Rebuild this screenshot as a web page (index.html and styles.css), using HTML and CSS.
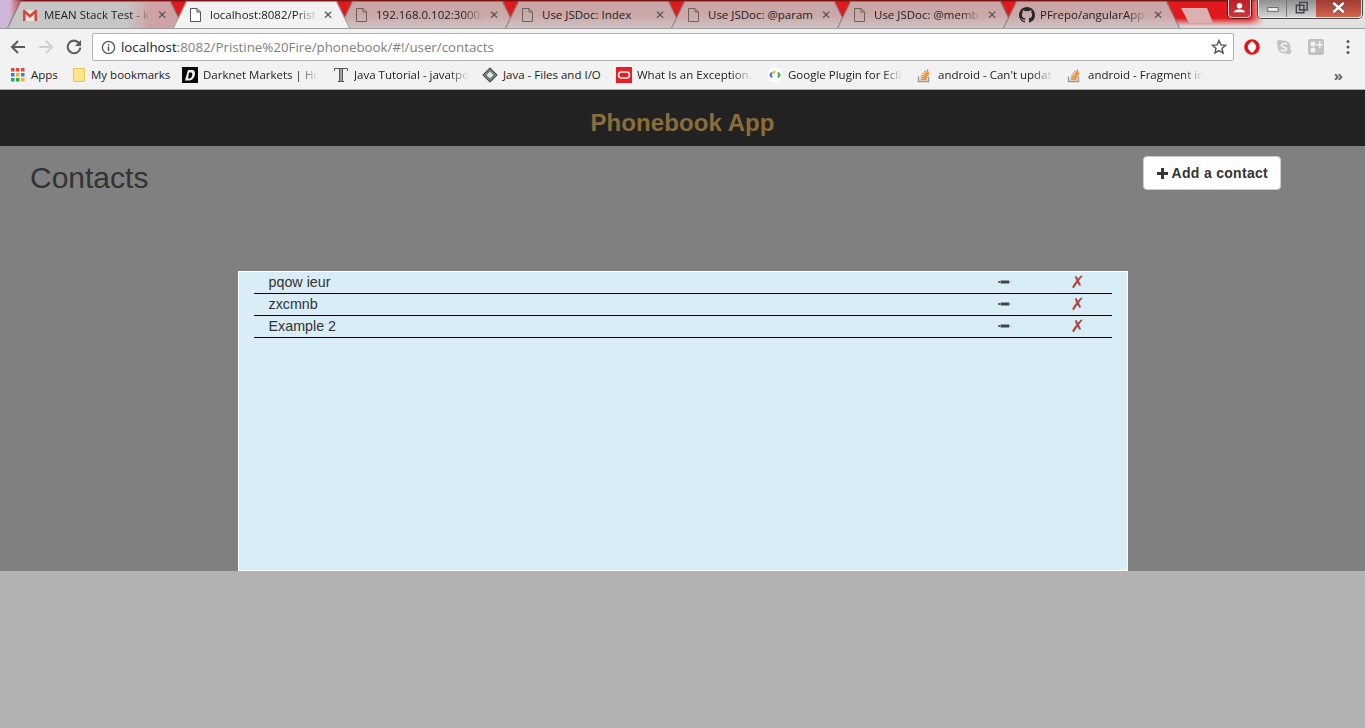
FILE: index.html
```html
<!DOCTYPE html>
<html lang="en">
<head>
  <meta charset="UTF-8" />
  <title>Phonebook App</title>
  <link rel="stylesheet" href="styles.css">
</head>
<body>
  <div class="browser">
    <div class="tabstrip">
      <div class="tab tab-first">
        <svg class="tab-icon" viewBox="0 0 16 16"><path fill="#e4e4e4" d="M0 3h14v11H0z"/><path fill="#d5473b" d="M0 3h2L7 7.500 12 3h2v11h-2.500V7L7 11 2.500 7v7H0z"/></svg>
        <span class="tab-title">MEAN Stack Test - k</span>
        <span class="tab-close">✕</span>
      </div>
      <div class="tab tab-active">
        <svg class="tab-icon" viewBox="0 0 16 16"><path fill="#fff" stroke="#555" d="M1.500 1.500H8l3.500 3.500v9.500h-10z M8 1.500V5h3.500"/></svg>
        <span class="tab-title">localhost:8082/Prist</span>
        <span class="tab-close">✕</span>
      </div>
      <div class="tab">
        <svg class="tab-icon" viewBox="0 0 16 16"><path fill="none" stroke="#665" d="M1.500 1.500H8l3.500 3.500v9.500h-10z M8 1.500V5h3.500"/></svg>
        <span class="tab-title">192.168.0.102:3000/</span>
        <span class="tab-close">✕</span>
      </div>
      <div class="tab">
        <svg class="tab-icon" viewBox="0 0 16 16"><path fill="none" stroke="#665" d="M1.500 1.500H8l3.500 3.500v9.500h-10z M8 1.500V5h3.500"/></svg>
        <span class="tab-title tab-title-full">Use JSDoc: Index</span>
        <span class="tab-close">✕</span>
      </div>
      <div class="tab">
        <svg class="tab-icon" viewBox="0 0 16 16"><path fill="none" stroke="#665" d="M1.500 1.500H8l3.500 3.500v9.500h-10z M8 1.500V5h3.500"/></svg>
        <span class="tab-title tab-title-full">Use JSDoc: @param</span>
        <span class="tab-close">✕</span>
      </div>
      <div class="tab">
        <svg class="tab-icon" viewBox="0 0 16 16"><path fill="none" stroke="#665" d="M1.500 1.500H8l3.500 3.500v9.500h-10z M8 1.500V5h3.500"/></svg>
        <span class="tab-title">Use JSDoc: @memb</span>
        <span class="tab-close">✕</span>
      </div>
      <div class="tab">
        <svg class="tab-icon" viewBox="0 0 16 16"><path fill="#24292e" d="M8 0C3.580 0 0 3.580 0 8c0 3.540 2.290 6.530 5.470 7.590.4.070.55-.17.55-.38v-1.340c-2.230.48-2.700-1.070-2.700-1.070-.36-.92-.89-1.170-.89-1.170-.73-.5.050-.49.050-.49.800.060 1.230.830 1.230.830.710 1.220 1.870.870 2.330.660.070-.520.280-.870.510-1.070-1.780-.2-3.640-.890-3.640-3.950 0-.870.310-1.590.820-2.150-.080-.2-.360-1.020.080-2.120 0 0 .670-.210 2.200.820a7.600 7.600 0 0 1 4 0c1.530-1.040 2.200-.820 2.200-.820.440 1.100.160 1.920.080 2.120.510.560.820 1.270.820 2.150 0 3.070-1.870 3.750-3.650 3.950.290.250.540.730.540 1.480v2.200c0 .210.150.460.550.380A8 8 0 0 0 16 8c0-4.420-3.580-8-8-8z"/></svg>
        <span class="tab-title">PFrepo/angularApp</span>
        <span class="tab-close">✕</span>
      </div>
      <div class="newtab"></div>
      <div class="winbtns">
        <div class="winbtn-user">
          <svg viewBox="0 0 23 18"><circle cx="11.500" cy="6" r="3" fill="#fff"/><path fill="#fff" d="M5 13c1-2.500 4-3 6.500-3s5.500.5 6.500 3z"/></svg>
        </div>
        <div class="winbtn-group">
          <div class="winbtn winbtn-min"><svg viewBox="0 0 28 18"><rect x="9" y="8" width="11" height="4" fill="#eee" stroke="#667"/></svg></div>
          <div class="winbtn winbtn-max"><svg viewBox="0 0 29 18"><path fill="none" stroke="#445" stroke-width="1.500" d="M12.500 2.500h8v8h-8z M9 5.500h8v8H9z"/></svg></div>
          <div class="winbtn winbtn-close"><svg viewBox="0 0 45 18"><path stroke="#555" stroke-width="4" d="M17 3l11 10M28 3 17 13"/><path stroke="#fff" stroke-width="2.600" d="M17 3l11 10M28 3 17 13"/></svg></div>
        </div>
      </div>
    </div>

    <div class="toolbar">
      <svg class="nav-icon" viewBox="0 0 16 16"><path fill="none" stroke="#5a5a5a" stroke-width="2" d="M15 8H2.500M8 2 2 8l6 6"/></svg>
      <svg class="nav-icon" viewBox="0 0 16 16"><path fill="none" stroke="#cfcfcf" stroke-width="2" d="M1 8h12.500M8 2l6 6-6 6"/></svg>
      <svg class="nav-icon" viewBox="0 0 16 16"><path fill="none" stroke="#5a5a5a" stroke-width="2" d="M13.600 5A6.300 6.300 0 1 0 14.300 8.500"/><path fill="#5a5a5a" d="M15 1v6H9z"/></svg>
      <div class="omnibox">
        <svg class="info-icon" viewBox="0 0 16 16"><circle cx="8" cy="8" r="6.500" fill="none" stroke="#555" stroke-width="1.400"/><path fill="#555" d="M7.200 7h1.600v4.800H7.200zM7.200 4.200h1.600v1.600H7.200z"/></svg>
        <span class="url"><span class="url-host">localhost</span>:8082/Pristine%20Fire/phonebook/#!/user/contacts</span>
        <svg class="star-icon" viewBox="0 0 16 16"><path fill="none" stroke="#555" stroke-width="1.400" d="M8 1.500l1.900 4.400 4.700.4-3.600 3.100 1.100 4.700L8 11.600l-4.100 2.500L5 9.400 1.400 6.300l4.700-.4z"/></svg>
      </div>
      <div class="extensions">
        <svg class="ext-icon" viewBox="0 0 16 16"><circle cx="8" cy="8" r="6" fill="#fff" stroke="#e3151a" stroke-width="3.600"/><ellipse cx="8" cy="8" rx="2.800" ry="5.500" fill="#fff"/></svg>
        <svg class="ext-icon" viewBox="0 0 16 16"><circle cx="8" cy="8" r="6.500" fill="#c4c4c4"/><circle cx="3.800" cy="3.800" r="3" fill="#c4c4c4"/><circle cx="12.200" cy="12.200" r="3" fill="#c4c4c4"/><path fill="none" stroke="#f2f2f2" stroke-width="1.800" d="M11 5.500C10 4 6 4 5.500 6c-.4 2.400 5 1.600 5 4 0 2-4 2.400-5.500.5"/></svg>
        <svg class="ext-icon" viewBox="0 0 16 16"><rect width="16" height="16" rx="2" fill="#c2c2c2"/><circle cx="5" cy="5" r="2.500" fill="#f2f2f2"/><circle cx="5" cy="11" r="2.500" fill="#f2f2f2"/><path fill="#f2f2f2" d="M11 2h1.500v3H15v1.500h-2.500v3H11v-3H8.500V5H11z"/></svg>
        <svg class="menu-icon" viewBox="0 0 4 16"><circle cx="2" cy="2.500" r="1.500" fill="#5a5a5a"/><circle cx="2" cy="8" r="1.500" fill="#5a5a5a"/><circle cx="2" cy="13.500" r="1.500" fill="#5a5a5a"/></svg>
      </div>
    </div>

    <div class="bookmarks">
      <div class="bm bm-apps">
        <svg class="bm-icon" viewBox="0 0 14 14">
          <path fill="#e04a3f" d="M0 0h3.500v3.500H0zM5 0h3.500v3.500H5zM10 0h3.500v3.500H10z"/>
          <path fill="#3a7de0" d="M0 5h3.500v3.500H0zM10 5h3.500v3.500H10z"/>
          <path fill="#efb51a" d="M5 5h3.500v3.500H5zM10 10h3.500v3.500H10z"/>
          <path fill="#36a852" d="M0 10h3.500v3.500H0zM5 10h3.500v3.500H5z"/>
        </svg>
        <span>Apps</span>
      </div>
      <div class="bm bm-folder">
        <svg class="bm-icon" viewBox="0 0 14 16"><path fill="#fde68a" stroke="#e8c65a" d="M1.500 1.500h11v13h-11z"/></svg>
        <span>My bookmarks</span>
      </div>
      <div class="bm">
        <svg class="bm-icon" viewBox="0 0 16 16"><rect width="16" height="16" fill="#0a0a0a"/><path fill="#f4f4f4" d="M6 3h4c3 0 3.500 3 2.500 6-1 3-3 4.500-6 4.500H3z"/><path fill="#0a0a0a" d="M7 5.500h2c1.500 0 1.500 2 1 3.500s-1.500 2.500-3 2.500H6z"/></svg>
        <span class="bm-title">Darknet Markets | Hov</span>
      </div>
      <div class="bm bm-java">
        <svg class="bm-icon" viewBox="0 0 16 16"><path fill="none" stroke="#555" d="M1.500 4V1.500h13V4M8 1.500v13M5 14.500h6M6.500 1.500v13M9.500 1.500v13"/></svg>
        <span class="bm-title">Java Tutorial - javatpo</span>
      </div>
      <div class="bm bm-files">
        <svg class="bm-icon" viewBox="0 0 16 16"><path fill="#6e7f72" stroke="#333" d="M8 .8 15.200 8 8 15.200.8 8z"/><path fill="#dfe8e0" d="M8 4.500 11.500 8 8 11.500 4.500 8z"/></svg>
        <span class="bm-text">Java - Files and I/O</span>
      </div>
      <div class="bm">
        <svg class="bm-icon" viewBox="0 0 16 16"><rect width="16" height="16" fill="#ed1c24"/><rect x="2.500" y="5" width="11" height="6" rx="3" fill="none" stroke="#fff" stroke-width="1.500"/></svg>
        <span class="bm-title">What Is an Exception?</span>
      </div>
      <div class="bm bm-tight">
        <svg class="bm-icon" viewBox="0 0 16 16"><circle cx="8" cy="8" r="7.500" fill="#fff"/><path fill="none" stroke="#3a7de0" stroke-width="2" d="M5 5.500 3.500 8 5 10.500"/><path fill="none" stroke="#efb51a" stroke-width="2" d="M8 3.800 6 6.500"/><path fill="none" stroke="#36a852" stroke-width="2" d="M11 5.500 12.500 8 11 10.500"/></svg>
        <span class="bm-title">Google Plugin for Eclip</span>
      </div>
      <div class="bm bm-tight">
        <svg class="bm-icon" viewBox="0 0 16 16"><path fill="none" stroke="#999" stroke-width="1.400" d="M1.500 9.500v5h10v-5"/><path fill="none" stroke="#f08a24" stroke-width="1.400" d="M3.500 12.500h6M3.700 10.400l6 .6M4.300 8.300l5.800 1.600M5.500 6l5 3M7.500 4l3.700 4.200M10 2.500l1.800 5"/></svg>
        <span class="bm-title">android - Can't update</span>
      </div>
      <div class="bm">
        <svg class="bm-icon" viewBox="0 0 16 16"><path fill="none" stroke="#999" stroke-width="1.400" d="M1.500 9.500v5h10v-5"/><path fill="none" stroke="#f08a24" stroke-width="1.400" d="M3.500 12.500h6M3.700 10.400l6 .6M4.300 8.300l5.800 1.600M5.500 6l5 3M7.500 4l3.700 4.200M10 2.500l1.800 5"/></svg>
        <span class="bm-title">android - Fragment in</span>
      </div>
      <span class="bm-more">»</span>
    </div>
  </div>

  <div class="app">
    <header class="app-header">
      <h1>Phonebook App</h1>
    </header>
    <main class="app-main">
      <div class="title-row">
        <h2>Contacts</h2>
        <button class="add-btn">
          <svg class="plus" viewBox="0 0 11 11"><path fill="#333" d="M4 0h3v4h4v3H7v4H4V7H0V4h4z"/></svg>
          Add a contact
        </button>
      </div>
      <div class="panel">
        <div class="contact-row">
          <span class="contact-name">pqow ieur</span>
          <span class="contact-edit"><svg viewBox="0 0 14 4"><path fill="#444" d="M0 1.500 2 1v2L0 2.500zM2.500 .5H11v3H2.500z"/><path fill="#667" d="M11 1.500l3 .5-3 .5z"/></svg></span>
          <span class="contact-del">✗</span>
        </div>
        <div class="contact-row">
          <span class="contact-name">zxcmnb</span>
          <span class="contact-edit"><svg viewBox="0 0 14 4"><path fill="#444" d="M0 1.500 2 1v2L0 2.500zM2.500 .5H11v3H2.500z"/><path fill="#667" d="M11 1.500l3 .5-3 .5z"/></svg></span>
          <span class="contact-del">✗</span>
        </div>
        <div class="contact-row">
          <span class="contact-name">Example 2</span>
          <span class="contact-edit"><svg viewBox="0 0 14 4"><path fill="#444" d="M0 1.500 2 1v2L0 2.500zM2.500 .5H11v3H2.500z"/><path fill="#667" d="M11 1.500l3 .5-3 .5z"/></svg></span>
          <span class="contact-del">✗</span>
        </div>
      </div>
    </main>
  </div>
</body>
</html>
```

FILE: styles.css
```css
* {
  box-sizing: border-box;
  margin: 0;
  padding: 0;
}

html, body {
  height: 728px;
  overflow: hidden;
}

body {
  display: flex;
  flex-direction: column;
  background: #b2b2b2;
  font-family: 'Liberation Sans', Arial, sans-serif;
  color: #333;
}

/* browser chrome */
.browser {
  height: 90px;
  flex: none;
  font-family: 'Open Sans', 'Noto Sans', sans-serif;
  font-size: 11.5px;
  color: #222;
}

.tabstrip {
  height: 29px;
  display: flex;
  padding-left: 7px;
  border-bottom: 1px solid #9c9c9c;
  background:
    linear-gradient(to right, #cdb6d8 0, #cdb6d8 10px, rgba(205, 182, 216, 0) 24px),
    linear-gradient(to right, rgba(226, 226, 226, 0) 1250px, #e2e2e2 1264px),
    linear-gradient(to bottom, #7c1416 0, #7c1416 1px, #e2191c 2px, #e2191c 18px, #dcd4d4 26px);
}

.tab {
  position: relative;
  width: 177px;
  height: 27px;
  margin-top: 1px;
  margin-right: -11px;
  padding: 0 16px 0 16px;
  display: flex;
  align-items: center;
  background: #877;
  clip-path: polygon(13px 0, 164px 0, 177px 100%, 0 100%);
}

.tab::before {
  content: '';
  position: absolute;
  top: 1px;
  left: 1px;
  right: 1px;
  bottom: 0;
  background: linear-gradient(to bottom, #c9a4a4 0, #cca9a9 14px, #cfc6c6 27px);
  clip-path: polygon(13px 0, 162px 0, 175px 100%, 0 100%);
}

.tab-first::before {
  background: linear-gradient(to right, #c6c6c6 0, #c6c6c6 118px, #cfa3a3 142px);
}

.tab-active {
  z-index: 2;
  background: #9c9c9c;
}

.tab-active::before {
  background: #f2f2f2;
}

.tab-icon {
  position: relative;
  width: 16px;
  height: 16px;
  margin-right: 5px;
  flex: none;
}

.tab-title {
  position: relative;
  flex: 1;
  min-width: 0;
  white-space: nowrap;
  -webkit-mask-image: linear-gradient(to left, transparent 0, #000 22px);
  mask-image: linear-gradient(to left, transparent 0, #000 22px);
}

.tab-title-full {
  -webkit-mask-image: none;
  mask-image: none;
}

.tab-close {
  position: relative;
  flex: none;
  width: 12px;
  margin-left: 4px;
  font-size: 12px;
  font-weight: 700;
  font-family: 'DejaVu Sans', sans-serif;
  color: #555;
  text-align: center;
}

.newtab {
  width: 32px;
  height: 15px;
  margin: 8px 0 0 12px;
  background: #dcb0b0;
  clip-path: polygon(0 0, 26px 0, 32px 100%, 8px 100%);
}

.winbtns {
  margin-left: auto;
  margin-right: 3px;
  display: flex;
  gap: 7px;
  align-items: flex-start;
}

.winbtn-user {
  width: 23px;
  height: 18px;
  background: linear-gradient(to bottom, #b8202a, #c9353a);
  border: 1px solid #f0d0d0;
  border-top: 0;
  border-radius: 0 0 4px 4px;
  box-shadow: 0 0 0 1px #5a1012;
}

.winbtn-user svg {
  display: block;
  width: 100%;
  height: 100%;
}

.winbtn-group {
  display: flex;
  height: 18px;
  border: 1px solid #eee;
  border-top: 0;
  border-radius: 0 0 4px 4px;
  box-shadow: 0 0 0 1px #444;
  overflow: hidden;
}

.winbtn {
  height: 17px;
}

.winbtn svg {
  display: block;
  height: 100%;
  width: 100%;
}

.winbtn-min {
  width: 28px;
  background: linear-gradient(to bottom, #8e8e8e, #d4d4d4);
  border-right: 1px solid #777;
}

.winbtn-max {
  width: 29px;
  background: linear-gradient(to bottom, #8e8e8e, #d4d4d4);
}

.winbtn-close {
  width: 45px;
  background: linear-gradient(to bottom, #a13a34, #d2634c);
}

.toolbar {
  height: 33px;
  display: flex;
  align-items: center;
  padding: 3px 0 0 10px;
  background: #f2f2f2;
}

.nav-icon {
  width: 16px;
  height: 16px;
  margin-right: 12px;
  flex: none;
}

.nav-icon:nth-child(3) {
  margin-right: 10px;
}

.omnibox {
  width: 1142px;
  height: 28px;
  flex: none;
  display: flex;
  align-items: center;
  padding: 0 6px 0 8px;
  background: #fff;
  border: 1px solid #b4b4b4;
  border-radius: 2px;
}

.info-icon {
  width: 15px;
  height: 15px;
  margin-right: 5px;
  flex: none;
}

.url {
  flex: 1;
  font-size: 13.3px;
  color: #808080;
}

.url-host {
  color: #222;
}

.star-icon {
  width: 16px;
  height: 16px;
  flex: none;
}

.extensions {
  display: flex;
  align-items: center;
  margin-left: 10px;
  gap: 16px;
}

.ext-icon {
  width: 16px;
  height: 16px;
}

.menu-icon {
  width: 4px;
  height: 16px;
  margin-left: 6px;
}

.bookmarks {
  height: 28px;
  display: flex;
  align-items: center;
  padding: 0 0 2px 11px;
  background: #f2f2f2;
  border-bottom: 1px solid #a9a9a9;
}

.bm {
  display: flex;
  align-items: center;
  gap: 5px;
  margin-right: 15px;
  white-space: nowrap;
}

.bm-icon {
  width: 16px;
  height: 16px;
  flex: none;
}

.bm-apps .bm-icon {
  width: 14px;
  height: 14px;
}

.bm-apps {
  gap: 6px;
  width: 47px;
  margin-right: 14px;
}

.bm-folder {
  width: 98px;
  margin-right: 12px;
}

.bm-folder .bm-icon {
  width: 14px;
}

.bm-title {
  width: 115px;
  -webkit-mask-image: linear-gradient(to left, transparent 0, #000 20px);
  mask-image: linear-gradient(to left, transparent 0, #000 20px);
}

.bm-java {
  margin-right: 13px;
}

.bm-files {
  margin-right: 13px;
}

.bm-text {
  width: 100px;
}

.bm-tight {
  margin-right: 14px;
}

.bm-more {
  margin-left: auto;
  margin-right: 22px;
  font-size: 15px;
  font-weight: 700;
  color: #666;
}

/* page */
.app {
  flex: none;
  height: 481px;
  display: flex;
  flex-direction: column;
  background: #808080;
}

.app-header {
  height: 56px;
  flex: none;
  background: #222;
  text-align: center;
}

.app-header h1 {
  font-size: 24px;
  line-height: 27px;
  padding-top: 19px;
  font-weight: 700;
  letter-spacing: .08px;
  color: #8a6d3b;
}

.app-main {
  flex: 1;
  min-height: 0;
  display: flex;
  flex-direction: column;
  align-items: center;
}

.title-row {
  width: 100%;
  height: 125px;
  flex: none;
  padding: 10px 84px 0 30px;
  display: flex;
  justify-content: space-between;
  align-items: flex-start;
}

.title-row h2 {
  font-size: 30px;
  font-weight: 400;
  line-height: 42px;
  padding-top: 1px;
  color: #333;
}

.add-btn {
  width: 138px;
  height: 34px;
  padding-left: 1px;
  background: #fff;
  border: 1px solid #ccc;
  border-radius: 4px;
  font-family: inherit;
  font-size: 14px;
  font-weight: 700;
  letter-spacing: .3px;
  color: #333;
}

.plus {
  width: 11px;
  height: 11px;
  vertical-align: -1px;
}

.panel {
  width: 890px;
  flex: 1;
  padding: 0 15px;
  background: #d9edf7;
  border: 1px solid #fff;
}

.contact-row {
  height: 22px;
  display: flex;
  align-items: center;
  padding-bottom: 2px;
  border-bottom: 1px solid #000;
  font-size: 14.3px;
  color: #333;
}

.contact-name {
  width: 744px;
  padding-left: 15px;
}

.contact-edit {
  width: 14px;
  display: flex;
}

.contact-edit svg {
  width: 14px;
  height: 4px;
}

.contact-del {
  margin-left: 59px;
  font-family: 'DejaVu Sans', sans-serif;
  font-size: 17px;
  line-height: 20px;
  color: #a94442;
}
```
